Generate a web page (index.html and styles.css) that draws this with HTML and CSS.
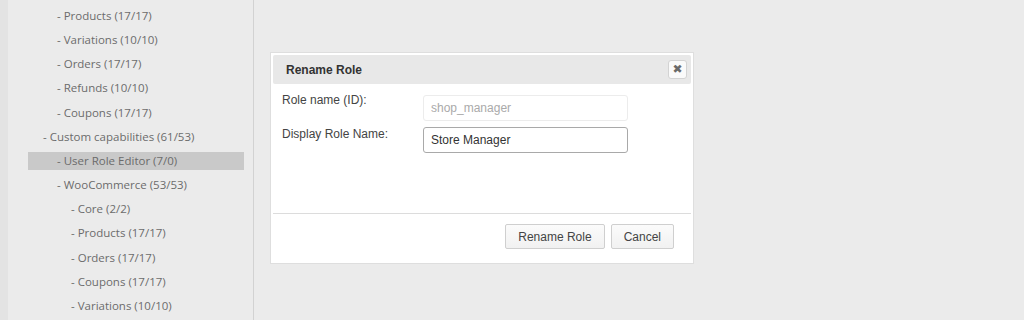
FILE: index.html
```html
<!DOCTYPE html>
<html lang="en">
<head>
    <meta charset="UTF-8">
    <title>Rename Role</title>
    <link rel="stylesheet" href="styles.css">
</head>
<body>
    <div class="page">
        <div class="sidebar">
            <ul class="caps-tree">
                <li class="lvl-2">- Products (17/17)</li>
                <li class="lvl-2">- Variations (10/10)</li>
                <li class="lvl-2">- Orders (17/17)</li>
                <li class="lvl-2">- Refunds (10/10)</li>
                <li class="lvl-2">- Coupons (17/17)</li>
                <li class="lvl-1">- Custom capabilities (61/53)</li>
                <li class="lvl-2 selected">- User Role Editor (7/0)</li>
                <li class="lvl-2">- WooCommerce (53/53)</li>
                <li class="lvl-3">- Core (2/2)</li>
                <li class="lvl-3">- Products (17/17)</li>
                <li class="lvl-3">- Orders (17/17)</li>
                <li class="lvl-3">- Coupons (17/17)</li>
                <li class="lvl-3">- Variations (10/10)</li>
            </ul>
        </div>
        <div class="main"></div>
    </div>

    <div class="dialog">
        <div class="dialog-title">
            <span>Rename Role</span>
            <button class="dialog-close" title="Close">&#x2716;</button>
        </div>
        <div class="dialog-content">
            <label class="field-label first">Role name (ID):</label>
            <input class="field-input" type="text" value="shop_manager" disabled>
            <label class="field-label">Display Role Name:</label>
            <input class="field-input" type="text" value="Store Manager">
        </div>
        <div class="dialog-buttons">
            <button class="btn">Rename Role</button>
            <button class="btn">Cancel</button>
        </div>
    </div>
</body>
</html>
```

FILE: styles.css
```css
* {
    margin: 0;
    padding: 0;
    box-sizing: border-box;
}

body {
    font-family: 'Liberation Sans', Arial, sans-serif;
    font-size: 12px;
    color: #333;
    background: #ebebeb;
    height: 320px;
    overflow: hidden;
}

.page {
    display: flex;
    height: 320px;
}

.sidebar {
    width: 254px;
    height: 100%;
    background: #ebebeb;
    border-left: 8px solid #e3e3e3;
    border-right: 1px solid #d2d2d2;
    padding: 7px 9px 0 20px;
}

.caps-tree {
    list-style: none;
    font-family: 'Open Sans', sans-serif;
    font-size: 11.5px;
    color: #6b6b6b;
}

.caps-tree li {
    height: 18px;
    line-height: 17px;
    margin-bottom: 6.17px;
    white-space: nowrap;
}

.caps-tree .lvl-1 { padding-left: 15px; }
.caps-tree .lvl-2 { padding-left: 29px; }
.caps-tree .lvl-3 { padding-left: 43px; }

.caps-tree .selected {
    background: #c9c9c9;
}

.main {
    flex: 1;
    background: #ebebeb;
}

/* modal */
.dialog {
    position: absolute;
    left: 270px;
    top: 52px;
    width: 424px;
    background: #fff;
    border: 1px solid #dedede;
    padding: 2px;
}

.dialog-title {
    height: 29px;
    background: #e8e8e8;
    border-radius: 2px;
    display: flex;
    align-items: center;
    justify-content: space-between;
    padding: 0 4px 0 13px;
    font-weight: bold;
    color: #333;
}

.dialog-close {
    width: 19px;
    height: 19px;
    border: 1px solid #d3d3d3;
    border-radius: 3px;
    background: #fafafa;
    color: #6a6a6a;
    font-size: 12px;
    line-height: 17px;
    text-align: center;
    font-family: 'DejaVu Sans', sans-serif;
}

.dialog-content {
    height: 130px;
    display: grid;
    grid-template-columns: 141px 205px;
    grid-auto-rows: 26px;
    row-gap: 6px;
    align-content: start;
    padding: 11px 0 0 9px;
    border-bottom: 1px solid #dcdcdc;
}

.field-label {
    color: #444;
}

.field-label.first {
    margin-top: -2px;
}

.field-input {
    font-family: 'Liberation Sans', Arial, sans-serif;
    font-size: 12px;
    height: 26px;
    padding: 0 7px;
    border: 1px solid #a9a9a9;
    border-radius: 3px;
    color: #333;
    background: #fff;
}

.field-input:disabled {
    border-color: #ececec;
    color: #aaa;
    background: #fff;
}

.dialog-buttons {
    height: 47px;
    display: flex;
    justify-content: flex-end;
    align-items: flex-start;
    gap: 6px;
    padding: 10px 17px 0 0;
}

.btn {
    font-family: 'Liberation Sans', Arial, sans-serif;
    font-size: 12px;
    color: #444;
    height: 25px;
    padding: 0 12px;
    border: 1px solid #cfcfcf;
    border-radius: 2px;
    background: linear-gradient(#fbfbfb, #f1f1f1);
}
```
